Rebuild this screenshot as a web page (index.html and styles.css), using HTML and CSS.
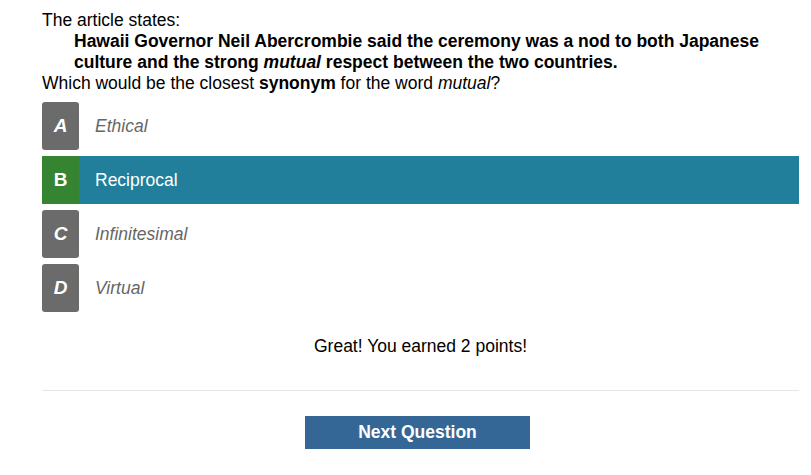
FILE: index.html
```html
<!DOCTYPE html>
<html>
<head>
<meta charset="utf-8">
<link rel="stylesheet" href="styles.css">
</head>
<body>
<div class="page">
  <div class="question">
    <p class="line">The article states:</p>
    <p class="quote">Hawaii Governor Neil Abercrombie said the ceremony was a nod to both Japanese culture and the strong <em>mutual</em> respect between the two countries.</p>
    <p class="line">Which would be the closest <strong>synonym</strong> for the word <em>mutual</em>?</p>
  </div>
  <ul class="options">
    <li class="option"><span class="letter">A</span><span class="label">Ethical</span></li>
    <li class="option selected"><span class="letter">B</span><span class="label">Reciprocal</span></li>
    <li class="option"><span class="letter">C</span><span class="label">Infinitesimal</span></li>
    <li class="option"><span class="letter">D</span><span class="label">Virtual</span></li>
  </ul>
  <p class="feedback">Great! You earned 2 points!</p>
  <hr class="divider">
  <div class="actions">
    <button class="next">Next Question</button>
  </div>
</div>
</body>
</html>
```
FILE: styles.css
```css
html, body {
  margin: 0;
  padding: 0;
  background: #fff;
}
body {
  font-family: "Liberation Sans", Arial, sans-serif;
  font-size: 17.5px;
  color: #000;
}
.page {
  width: 757px;
  padding: 10px 0 0 42px;
}
.question p {
  margin: 0;
  line-height: 21px;
}
.quote {
  font-weight: bold;
  padding-left: 32px;
  padding-right: 30px;
}
.options {
  list-style: none;
  margin: 8px 0 0;
  padding: 0;
  display: flex;
  flex-direction: column;
  gap: 6px;
}
.option {
  display: flex;
  align-items: center;
  height: 48px;
}
.letter {
  width: 37px;
  height: 48px;
  border-radius: 3px;
  background: #6b6b6b;
  color: #fff;
  font-weight: bold;
  font-style: italic;
  font-size: 19px;
  display: flex;
  align-items: center;
  justify-content: center;
}
.label {
  padding-left: 16px;
  font-style: italic;
  color: #666;
}
.option.selected {
  background: #217f9b;
}
.option.selected .letter {
  background: #358431;
  border-radius: 0;
  font-style: normal;
}
.option.selected .label {
  color: #fff;
  font-style: normal;
}
.feedback {
  margin: 24px 0 0;
  text-align: center;
  line-height: 21px;
}
.divider {
  border: 0;
  border-top: 1px solid #e6e6e6;
  margin: 33px 0 0;
}
.actions {
  display: flex;
  justify-content: center;
  padding-top: 25px;
  padding-right: 6px;
}
.next {
  width: 225px;
  height: 33px;
  border: 0;
  background: #346796;
  color: #fff;
  font-family: "Liberation Sans", Arial, sans-serif;
  font-size: 17.5px;
  font-weight: bold;
  padding: 0;
}
```
